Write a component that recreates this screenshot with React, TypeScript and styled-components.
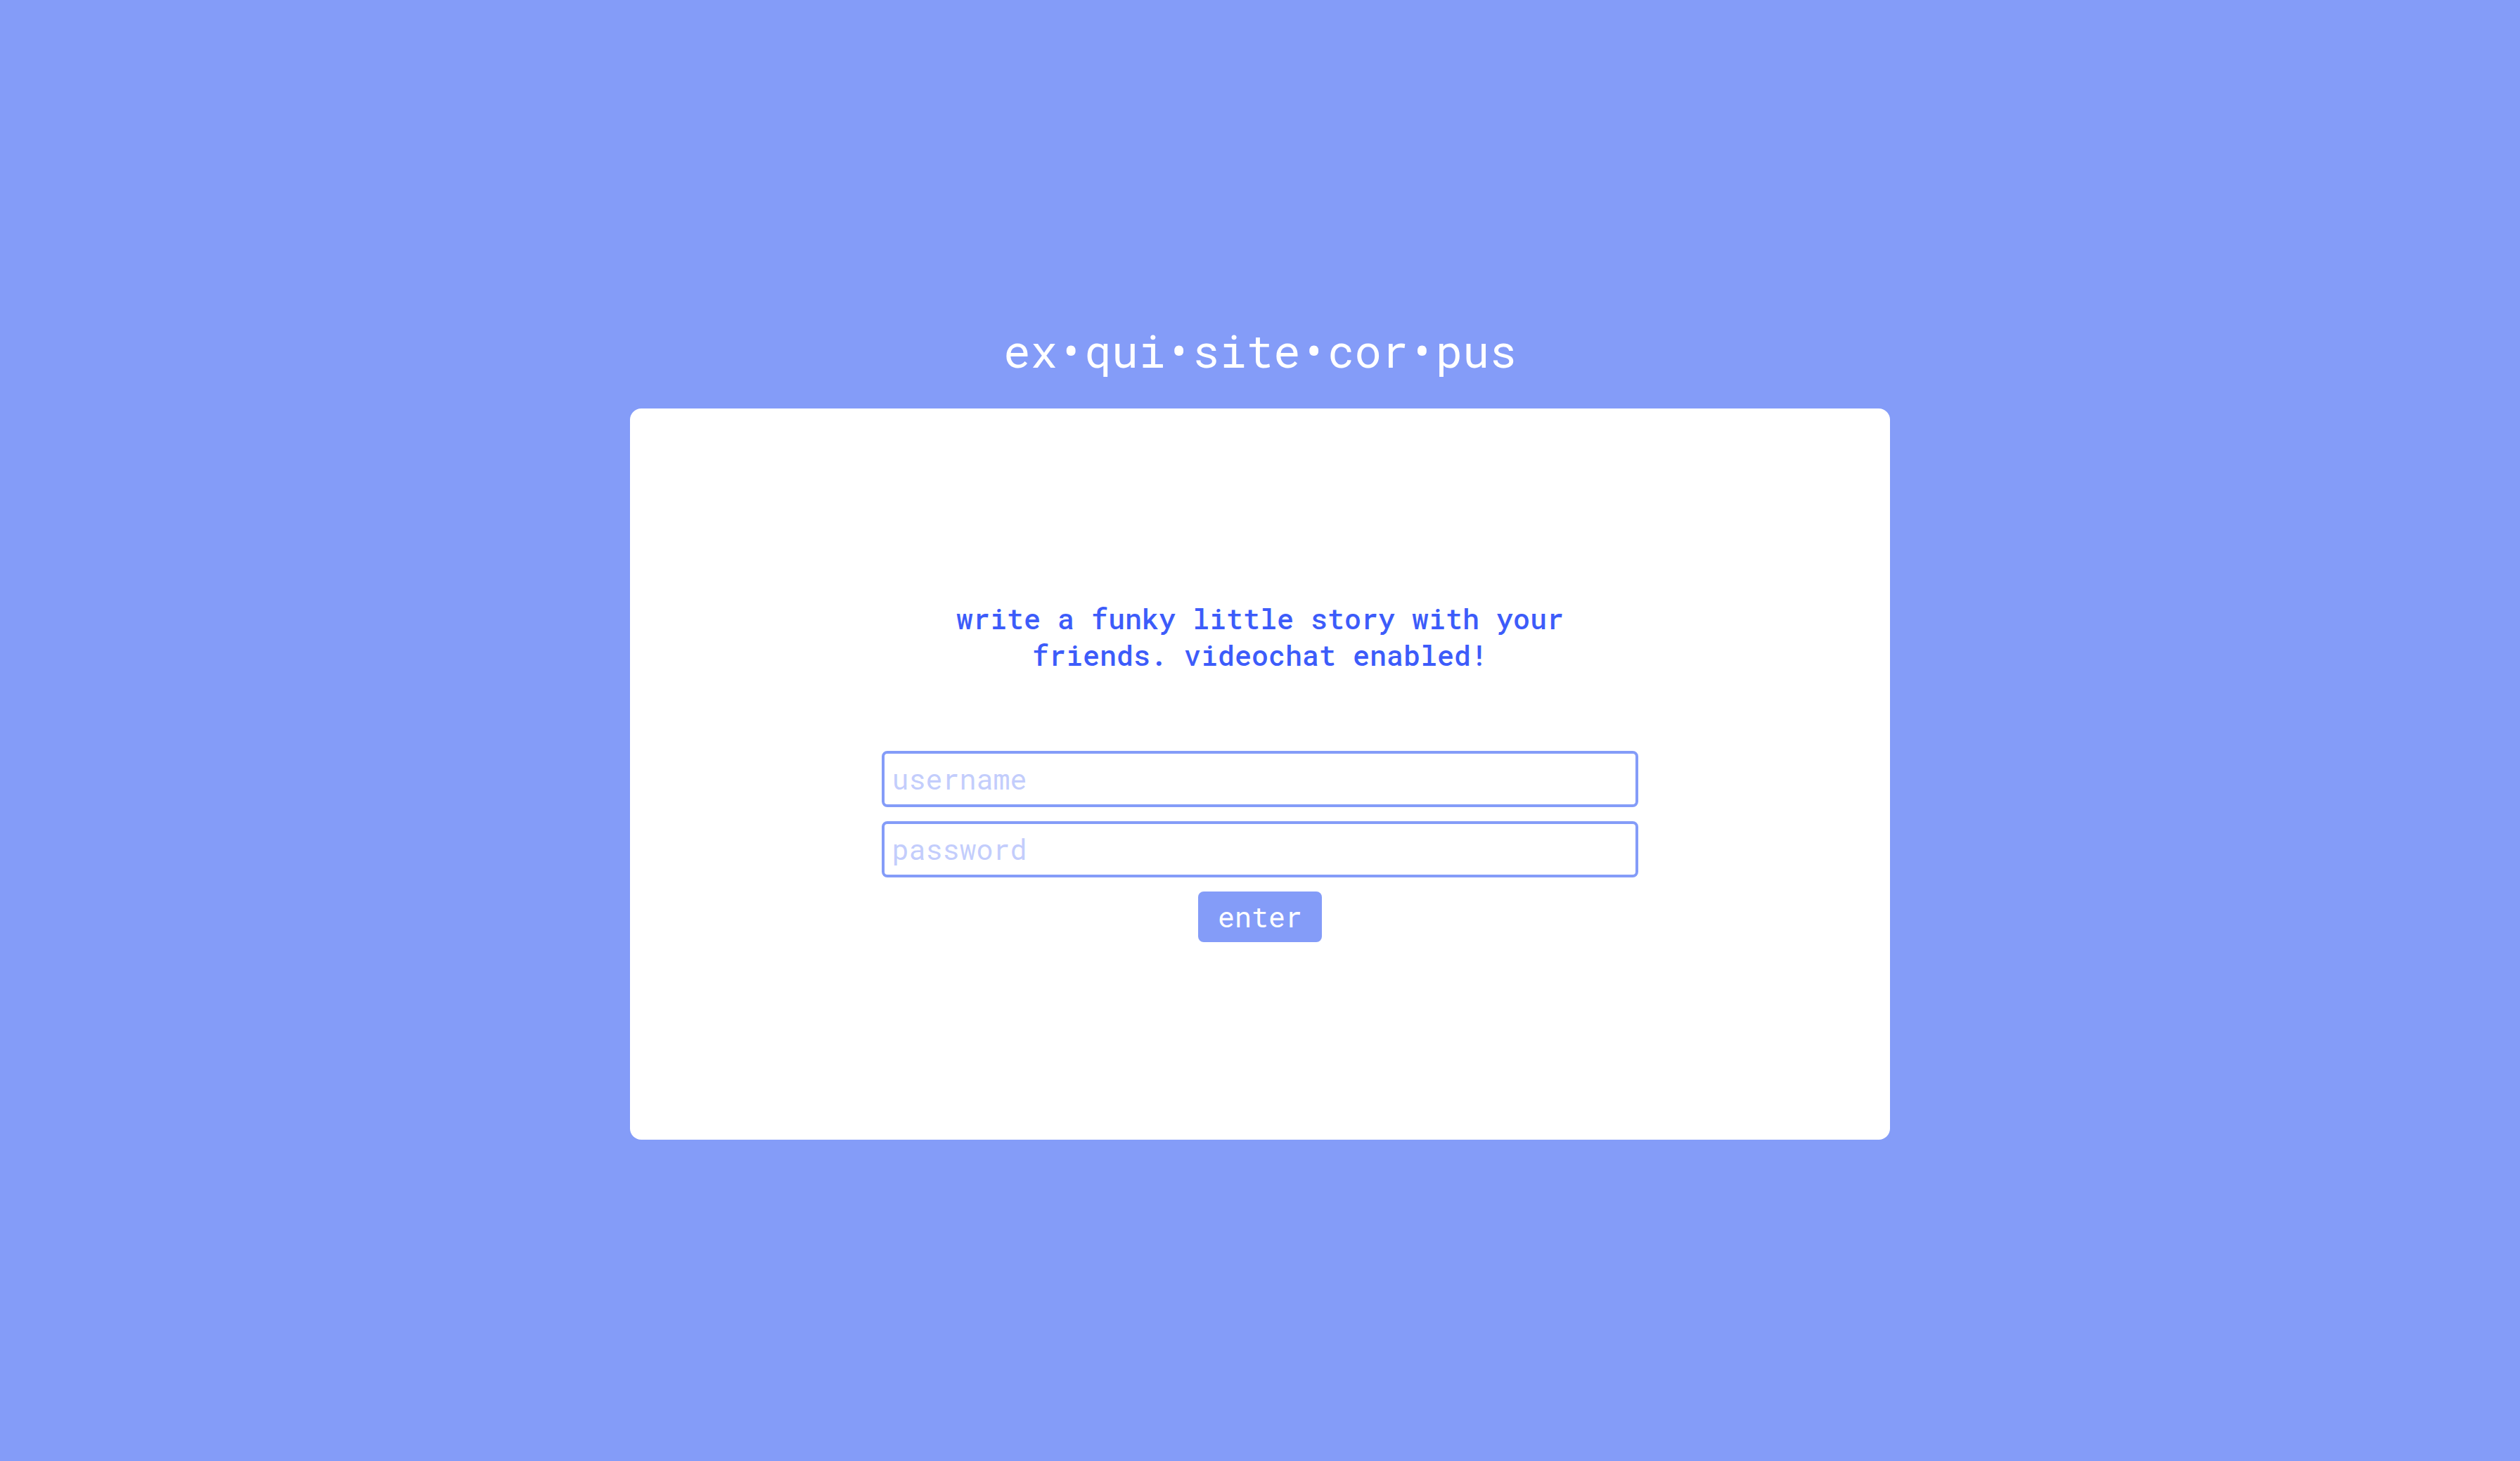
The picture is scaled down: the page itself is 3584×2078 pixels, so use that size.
import React from "react";
import { useState } from "react";
import styled, { createGlobalStyle } from "styled-components";

const GlobalStyle = createGlobalStyle`
  html, body {
    margin: 0;
    padding: 0;
    background-color: #849cf8;
  }
  * {
    box-sizing: border-box;
  }
`;

export default function App(): React.ReactElement {
  const [username, setUsername] = useState("");
  const [password, setPassword] = useState("");

  const handleSubmit = (e: React.FormEvent<HTMLFormElement>) => {
    e.preventDefault();
  };

  return (
    <Page>
      <GlobalStyle />
      <Title>ex•qui•site•cor•pus</Title>
      <Card>
        <Intro>
          write a funky little story with your friends. videochat enabled!
        </Intro>
        <LoginForm onSubmit={handleSubmit}>
          <Field
            type="text"
            placeholder="username"
            value={username}
            onChange={(e) => setUsername(e.target.value)}
          />
          <Field
            type="password"
            placeholder="password"
            value={password}
            onChange={(e) => setPassword(e.target.value)}
          />
          <EnterButton type="submit">enter</EnterButton>
        </LoginForm>
      </Card>
    </Page>
  );
}

const mono = `"Roboto Mono", "DejaVu Sans Mono", "Liberation Mono", monospace`;

const Page = styled.div`
  width: 100%;
  min-height: 100vh;
  display: flex;
  flex-direction: column;
  align-items: center;
  justify-content: center;
  font-family: ${mono};
`;

const Title = styled.h1`
  margin: 0 0 45px;
  padding-top: 3px;
  font-size: 64px;
  line-height: 76px;
  font-weight: 400;
  color: #ffffff;
  text-align: center;
`;

const Card = styled.main`
  width: 50vw;
  height: 1040px;
  padding-bottom: 9px;
  background-color: #ffffff;
  border-radius: 16px;
  display: flex;
  flex-direction: column;
  align-items: center;
  justify-content: center;
`;

const Intro = styled.p`
  width: 60%;
  margin: 0 0 110px;
  font-size: 40px;
  line-height: 52px;
  font-weight: 500;
  color: #3d5cfa;
  text-align: center;
`;

const LoginForm = styled.form`
  width: 60%;
  display: flex;
  flex-direction: column;
  align-items: center;
  gap: 20px;
`;

const Field = styled.input`
  width: 100%;
  height: 80px;
  padding: 0 10px;
  border: 4px solid #849cf8;
  border-radius: 8px;
  font-family: ${mono};
  font-size: 40px;
  color: #3d5cfa;
  outline: none;

  &::placeholder {
    color: #c3cdfc;
  }
`;

const EnterButton = styled.button`
  height: 72px;
  padding: 0 28px;
  border: 0;
  border-radius: 8px;
  background-color: #849cf8;
  color: #ffffff;
  font-family: ${mono};
  font-size: 40px;
  cursor: pointer;
`;
